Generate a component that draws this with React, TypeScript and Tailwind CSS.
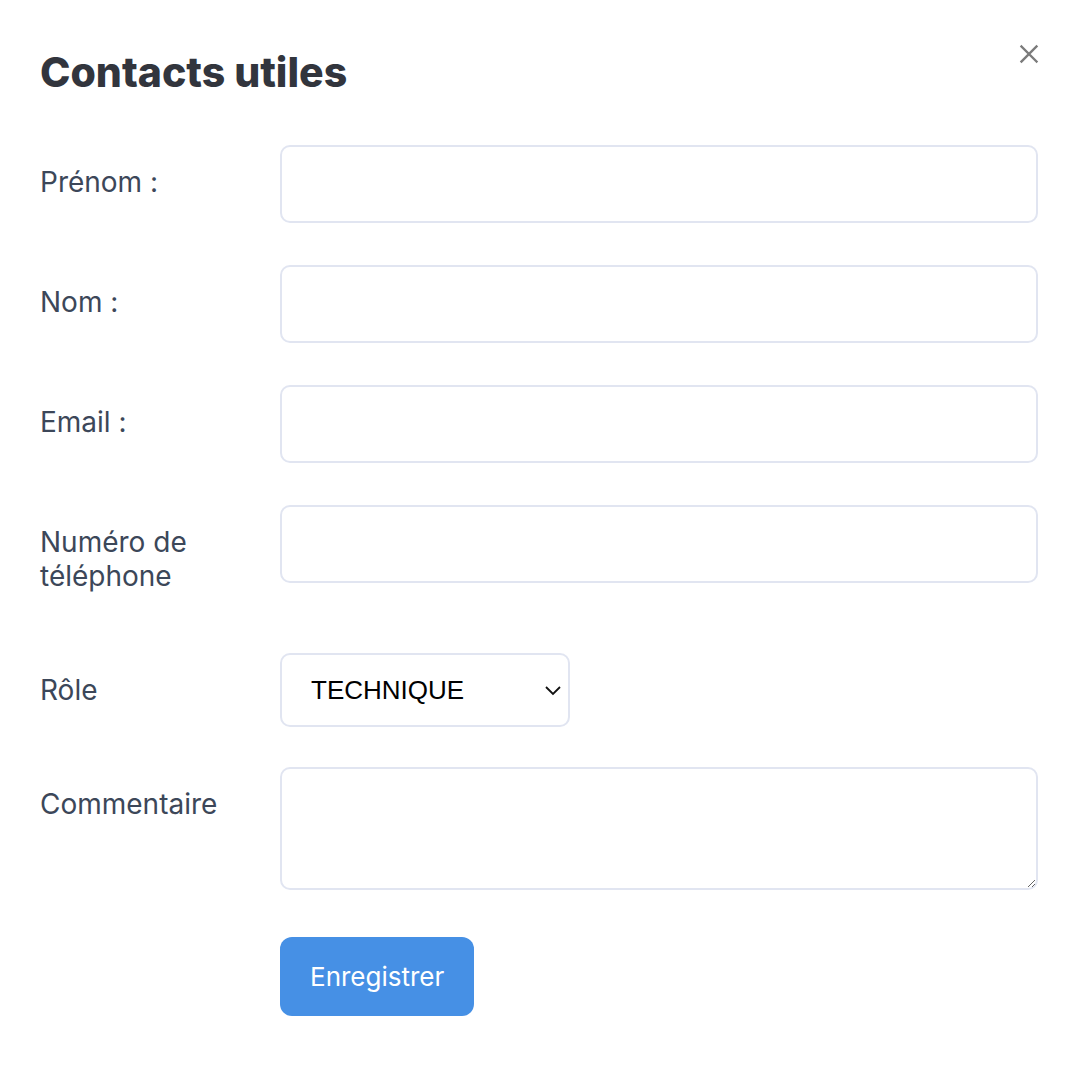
import { useState } from 'react'

const labelCls = "w-[240px] shrink-0 pt-[20px] text-[28px] leading-[34px] text-[#3c4759]"
const fieldCls = "block w-full rounded-[10px] border-2 border-[#e1e5f1] bg-white outline-none"

function Row({ label, children, className }: { label: string; children: React.ReactNode; className?: string }) {
  return (
    <div className={"flex items-start " + (className ?? "")}>
      <div className={labelCls}>{label}</div>
      <div className="flex-1">{children}</div>
    </div>
  )
}

export default function App() {
  const [role, setRole] = useState('TECHNIQUE')

  return (
    <div className="min-h-screen bg-white font-['Inter',sans-serif]">
      <div className="relative pl-[40px] pr-[44px] pt-[48px] pb-[60px]">
        <button className="absolute right-[41px] top-[42px] text-[#7b7b7b]" aria-label="Fermer">
          <svg width="24" height="24" viewBox="0 0 24 24" fill="none" stroke="currentColor" strokeWidth="2.4" strokeLinecap="square">
            <path d="M4.5 4.5 L19.5 19.5 M19.5 4.5 L4.5 19.5" />
          </svg>
        </button>

        <h1 className="text-[41px] leading-[48px] font-extrabold text-[#32353d]">Contacts utiles</h1>

        <form className="mt-[49px]" onSubmit={(e) => e.preventDefault()}>
          <Row label="Prénom :">
            <input className={fieldCls + " h-[78px] px-4 text-[24px]"} />
          </Row>
          <Row label="Nom :" className="mt-[42px]">
            <input className={fieldCls + " h-[78px] px-4 text-[24px]"} />
          </Row>
          <Row label="Email :" className="mt-[42px]">
            <input className={fieldCls + " h-[78px] px-4 text-[24px]"} />
          </Row>
          <Row label="Numéro de téléphone" className="mt-[42px]">
            <input className={fieldCls + " h-[78px] px-4 text-[24px]"} />
          </Row>
          <Row label="Rôle" className="mt-[60px]">
            <div className="relative w-[290px]">
              <select
                value={role}
                onChange={(e) => setRole(e.target.value)}
                className={fieldCls + " h-[74px] appearance-none pl-[29px] pr-10 text-[26px] text-black font-['Liberation_Sans',Arial,sans-serif]"}
              >
                <option>TECHNIQUE</option>
                <option>COMMERCIAL</option>
                <option>ADMINISTRATIF</option>
              </select>
              <svg className="pointer-events-none absolute right-[8px] top-[31px]" width="18" height="12" viewBox="0 0 18 12" fill="none" stroke="#111" strokeWidth="1.8">
                <path d="M2 3 L9 10 L16 3" />
              </svg>
            </div>
          </Row>
          <Row label="Commentaire" className="mt-[40px]">
            <textarea className={fieldCls + " h-[123px] px-4 py-3 text-[24px]"} />
          </Row>
          <div className="mt-[47px] flex">
            <div className="w-[240px] shrink-0" />
            <button type="submit" className="h-[79px] rounded-[12px] bg-[#4690e5] px-[30px] text-[26px] text-white">
              Enregistrer
            </button>
          </div>
        </form>
      </div>
    </div>
  )
}
